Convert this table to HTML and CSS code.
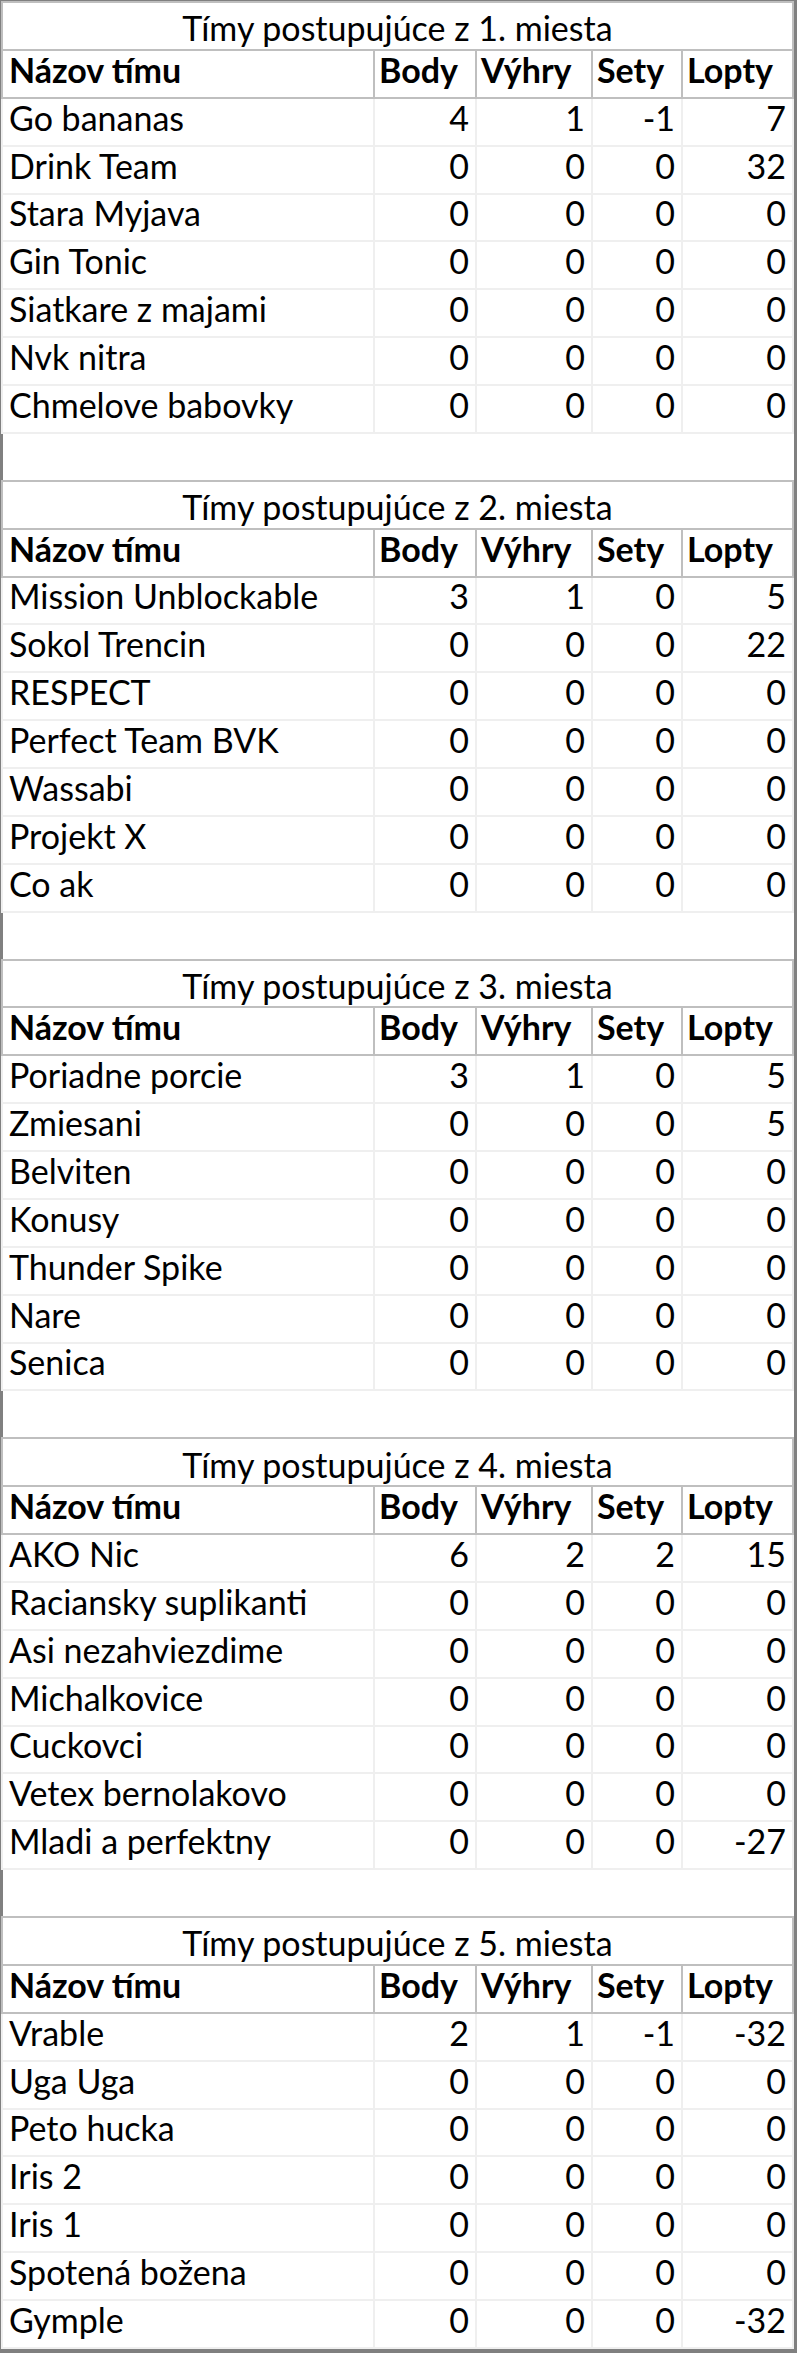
FILE: index.html
```html
<!DOCTYPE html>
<html lang="sk">
<head>
<meta charset="utf-8">
<title>Tímy postupujúce</title>
<link rel="stylesheet" href="styles.css">
</head>
<body>
<div class="sheet">
  <section class="group">
    <div class="title">Tímy postupujúce z 1. miesta</div>
    <div class="row head"><div class="c name">Názov tímu</div><div class="c">Body</div><div class="c">Výhry</div><div class="c">Sety</div><div class="c">Lopty</div></div>
    <div class="row"><div class="c name">Go bananas</div><div class="c">4</div><div class="c">1</div><div class="c">-1</div><div class="c">7</div></div>
    <div class="row"><div class="c name">Drink Team</div><div class="c">0</div><div class="c">0</div><div class="c">0</div><div class="c">32</div></div>
    <div class="row"><div class="c name">Stara Myjava</div><div class="c">0</div><div class="c">0</div><div class="c">0</div><div class="c">0</div></div>
    <div class="row"><div class="c name">Gin Tonic</div><div class="c">0</div><div class="c">0</div><div class="c">0</div><div class="c">0</div></div>
    <div class="row"><div class="c name">Siatkare z majami</div><div class="c">0</div><div class="c">0</div><div class="c">0</div><div class="c">0</div></div>
    <div class="row"><div class="c name">Nvk nitra</div><div class="c">0</div><div class="c">0</div><div class="c">0</div><div class="c">0</div></div>
    <div class="row"><div class="c name">Chmelove babovky</div><div class="c">0</div><div class="c">0</div><div class="c">0</div><div class="c">0</div></div>
  </section>
  <div class="spacer"></div>
  <section class="group">
    <div class="title">Tímy postupujúce z 2. miesta</div>
    <div class="row head"><div class="c name">Názov tímu</div><div class="c">Body</div><div class="c">Výhry</div><div class="c">Sety</div><div class="c">Lopty</div></div>
    <div class="row"><div class="c name">Mission Unblockable</div><div class="c">3</div><div class="c">1</div><div class="c">0</div><div class="c">5</div></div>
    <div class="row"><div class="c name">Sokol Trencin</div><div class="c">0</div><div class="c">0</div><div class="c">0</div><div class="c">22</div></div>
    <div class="row"><div class="c name">RESPECT</div><div class="c">0</div><div class="c">0</div><div class="c">0</div><div class="c">0</div></div>
    <div class="row"><div class="c name">Perfect Team BVK</div><div class="c">0</div><div class="c">0</div><div class="c">0</div><div class="c">0</div></div>
    <div class="row"><div class="c name">Wassabi</div><div class="c">0</div><div class="c">0</div><div class="c">0</div><div class="c">0</div></div>
    <div class="row"><div class="c name">Projekt X</div><div class="c">0</div><div class="c">0</div><div class="c">0</div><div class="c">0</div></div>
    <div class="row"><div class="c name">Co ak</div><div class="c">0</div><div class="c">0</div><div class="c">0</div><div class="c">0</div></div>
  </section>
  <div class="spacer"></div>
  <section class="group">
    <div class="title">Tímy postupujúce z 3. miesta</div>
    <div class="row head"><div class="c name">Názov tímu</div><div class="c">Body</div><div class="c">Výhry</div><div class="c">Sety</div><div class="c">Lopty</div></div>
    <div class="row"><div class="c name">Poriadne porcie</div><div class="c">3</div><div class="c">1</div><div class="c">0</div><div class="c">5</div></div>
    <div class="row"><div class="c name">Zmiesani</div><div class="c">0</div><div class="c">0</div><div class="c">0</div><div class="c">5</div></div>
    <div class="row"><div class="c name">Belviten</div><div class="c">0</div><div class="c">0</div><div class="c">0</div><div class="c">0</div></div>
    <div class="row"><div class="c name">Konusy</div><div class="c">0</div><div class="c">0</div><div class="c">0</div><div class="c">0</div></div>
    <div class="row"><div class="c name">Thunder Spike</div><div class="c">0</div><div class="c">0</div><div class="c">0</div><div class="c">0</div></div>
    <div class="row"><div class="c name">Nare</div><div class="c">0</div><div class="c">0</div><div class="c">0</div><div class="c">0</div></div>
    <div class="row"><div class="c name">Senica</div><div class="c">0</div><div class="c">0</div><div class="c">0</div><div class="c">0</div></div>
  </section>
  <div class="spacer"></div>
  <section class="group">
    <div class="title">Tímy postupujúce z 4. miesta</div>
    <div class="row head"><div class="c name">Názov tímu</div><div class="c">Body</div><div class="c">Výhry</div><div class="c">Sety</div><div class="c">Lopty</div></div>
    <div class="row"><div class="c name">AKO Nic</div><div class="c">6</div><div class="c">2</div><div class="c">2</div><div class="c">15</div></div>
    <div class="row"><div class="c name">Raciansky suplikanti</div><div class="c">0</div><div class="c">0</div><div class="c">0</div><div class="c">0</div></div>
    <div class="row"><div class="c name">Asi nezahviezdime</div><div class="c">0</div><div class="c">0</div><div class="c">0</div><div class="c">0</div></div>
    <div class="row"><div class="c name">Michalkovice</div><div class="c">0</div><div class="c">0</div><div class="c">0</div><div class="c">0</div></div>
    <div class="row"><div class="c name">Cuckovci</div><div class="c">0</div><div class="c">0</div><div class="c">0</div><div class="c">0</div></div>
    <div class="row"><div class="c name">Vetex bernolakovo</div><div class="c">0</div><div class="c">0</div><div class="c">0</div><div class="c">0</div></div>
    <div class="row"><div class="c name">Mladi a perfektny</div><div class="c">0</div><div class="c">0</div><div class="c">0</div><div class="c">-27</div></div>
  </section>
  <div class="spacer"></div>
  <section class="group">
    <div class="title">Tímy postupujúce z 5. miesta</div>
    <div class="row head"><div class="c name">Názov tímu</div><div class="c">Body</div><div class="c">Výhry</div><div class="c">Sety</div><div class="c">Lopty</div></div>
    <div class="row"><div class="c name">Vrable</div><div class="c">2</div><div class="c">1</div><div class="c">-1</div><div class="c">-32</div></div>
    <div class="row"><div class="c name">Uga Uga</div><div class="c">0</div><div class="c">0</div><div class="c">0</div><div class="c">0</div></div>
    <div class="row"><div class="c name">Peto hucka</div><div class="c">0</div><div class="c">0</div><div class="c">0</div><div class="c">0</div></div>
    <div class="row"><div class="c name">Iris 2</div><div class="c">0</div><div class="c">0</div><div class="c">0</div><div class="c">0</div></div>
    <div class="row"><div class="c name">Iris 1</div><div class="c">0</div><div class="c">0</div><div class="c">0</div><div class="c">0</div></div>
    <div class="row"><div class="c name">Spotená božena</div><div class="c">0</div><div class="c">0</div><div class="c">0</div><div class="c">0</div></div>
    <div class="row"><div class="c name">Gymple</div><div class="c">0</div><div class="c">0</div><div class="c">0</div><div class="c">-32</div></div>
  </section>
</div>
</body>
</html>
```
FILE: styles.css
```css
html, body {
  margin: 0;
  padding: 0;
  background: #ffffff;
}
body {
  font-family: Lato, "Open Sans", sans-serif;
  color: #000000;
}
.sheet {
  width: 797px;
  box-sizing: border-box;
  border: 1px solid #808080;
  border-right-width: 3px;
  border-bottom-width: 4px;
}
.title {
  box-sizing: border-box;
  height: 49.88px;
  border: 2px solid #bfbfbf;
  display: flex;
  align-items: flex-end;
  justify-content: center;
  padding-bottom: 3.5px;
  font-size: 34px;
  line-height: 34px;
}
.row {
  display: grid;
  grid-template-columns: 372px 102px 116px 90px 111px;
  height: 47.88px;
  border-left: 2px solid #efefef;
}
.row.head {
  border-left-color: #bfbfbf;
}
.c {
  box-sizing: border-box;
  border-right: 2px solid #efefef;
  border-bottom: 2px solid #efefef;
  display: flex;
  align-items: flex-end;
  justify-content: flex-end;
  padding: 0 6px 10px 4px;
  font-size: 34px;
  line-height: 34px;
  white-space: nowrap;
}
.c.name {
  justify-content: flex-start;
  padding-left: 6px;
}
.head .c {
  border-color: #bfbfbf;
  font-weight: 700;
  justify-content: flex-start;
}
.head .c.name {
  padding-left: 6px;
}
.spacer {
  height: 45.88px;
  border-left: 2px solid #808080;
}
```
